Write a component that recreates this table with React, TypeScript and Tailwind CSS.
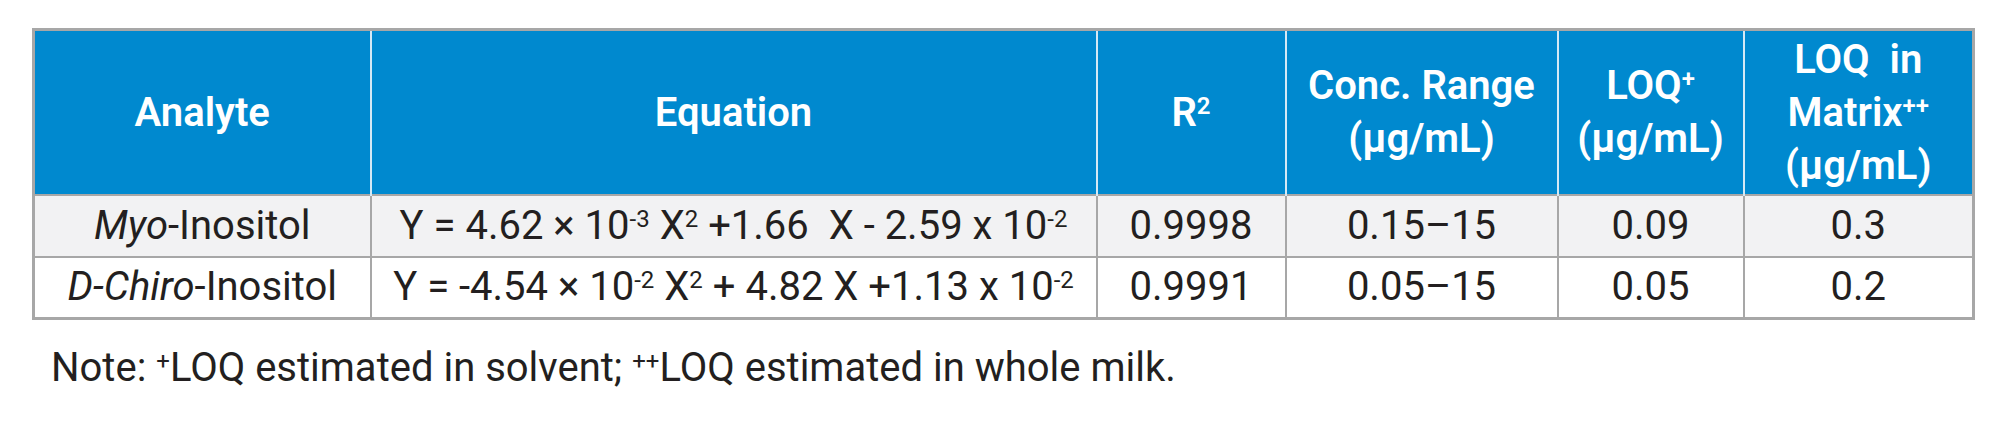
const font = { fontFamily: "Roboto, 'Liberation Sans', sans-serif" };

const Sup = ({ children }: { children: React.ReactNode }) => (
  <sup className="text-[0.6em] relative -top-[0.5em] align-baseline">{children}</sup>
);

const headers = [
  { key: "analyte", label: <>Analyte</> },
  { key: "equation", label: <>Equation</> },
  {
    key: "r2",
    label: (
      <>
        R<Sup>2</Sup>
      </>
    ),
  },
  {
    key: "range",
    label: (
      <>
        Conc. Range
        <br />
        (µg/mL)
      </>
    ),
  },
  {
    key: "loq",
    label: (
      <>
        LOQ<Sup>+</Sup>
        <br />
        (µg/mL)
      </>
    ),
  },
  {
    key: "matrix",
    label: (
      <>
        LOQ&nbsp; in
        <br />
        Matrix<Sup>++</Sup>
        <br />
        (µg/mL)
      </>
    ),
  },
];

const rows = [
  {
    id: "myo",
    analyte: (
      <>
        <i>Myo</i>-Inositol
      </>
    ),
    equation: (
      <>
        Y = 4.62 × 10<Sup>-3</Sup> X<Sup>2</Sup> +1.66&nbsp; X - 2.59 x 10<Sup>-2</Sup>
      </>
    ),
    r2: "0.9998",
    range: "0.15–15",
    loq: "0.09",
    matrix: "0.3",
    bg: "bg-[#f2f2f3]",
  },
  {
    id: "chiro",
    analyte: (
      <>
        <i>D-Chiro</i>-Inositol
      </>
    ),
    equation: (
      <>
        Y = -4.54 × 10<Sup>-2</Sup> X<Sup>2</Sup> + 4.82 X +1.13 x 10<Sup>-2</Sup>
      </>
    ),
    r2: "0.9991",
    range: "0.05–15",
    loq: "0.05",
    matrix: "0.2",
    bg: "bg-white",
  },
];

export default function App() {
  return (
    <div className="w-[2000px] h-[424px] bg-white pt-[28px] pl-[32px] text-[#231f20]" style={font}>
      <table className="table-fixed border-collapse border-[3px] border-[#a7a7a7] w-[1940px]">
        <colgroup>
          <col className="w-[337px]" />
          <col className="w-[726px]" />
          <col className="w-[189px]" />
          <col className="w-[272px]" />
          <col className="w-[186px]" />
          <col className="w-[230px]" />
        </colgroup>
        <thead>
          <tr className="bg-[#0089cf] h-[165px]">
            {headers.map((h) => (
              <th
                key={h.key}
                className="text-white font-semibold text-[40px] leading-[53px] text-center border-x-2 border-[#d4e9f5] first:border-l-0 last:border-r-0"
              >
                {h.label}
              </th>
            ))}
          </tr>
        </thead>
        <tbody>
          {rows.map((row) => (
            <tr key={row.id} className={`${row.bg} h-[62px]`}>
              {[row.analyte, row.equation, row.r2, row.range, row.loq, row.matrix].map((cell, i) => (
                <td
                  key={i}
                  className="border-2 border-[#a7a7a7] text-center text-[40px] leading-none whitespace-nowrap"
                >
                  {cell}
                </td>
              ))}
            </tr>
          ))}
        </tbody>
      </table>
      <p className="mt-[28px] ml-[19px] text-[40px] leading-none">
        Note: <Sup>+</Sup>LOQ estimated in solvent; <Sup>++</Sup>LOQ estimated in whole milk.
      </p>
    </div>
  );
}
